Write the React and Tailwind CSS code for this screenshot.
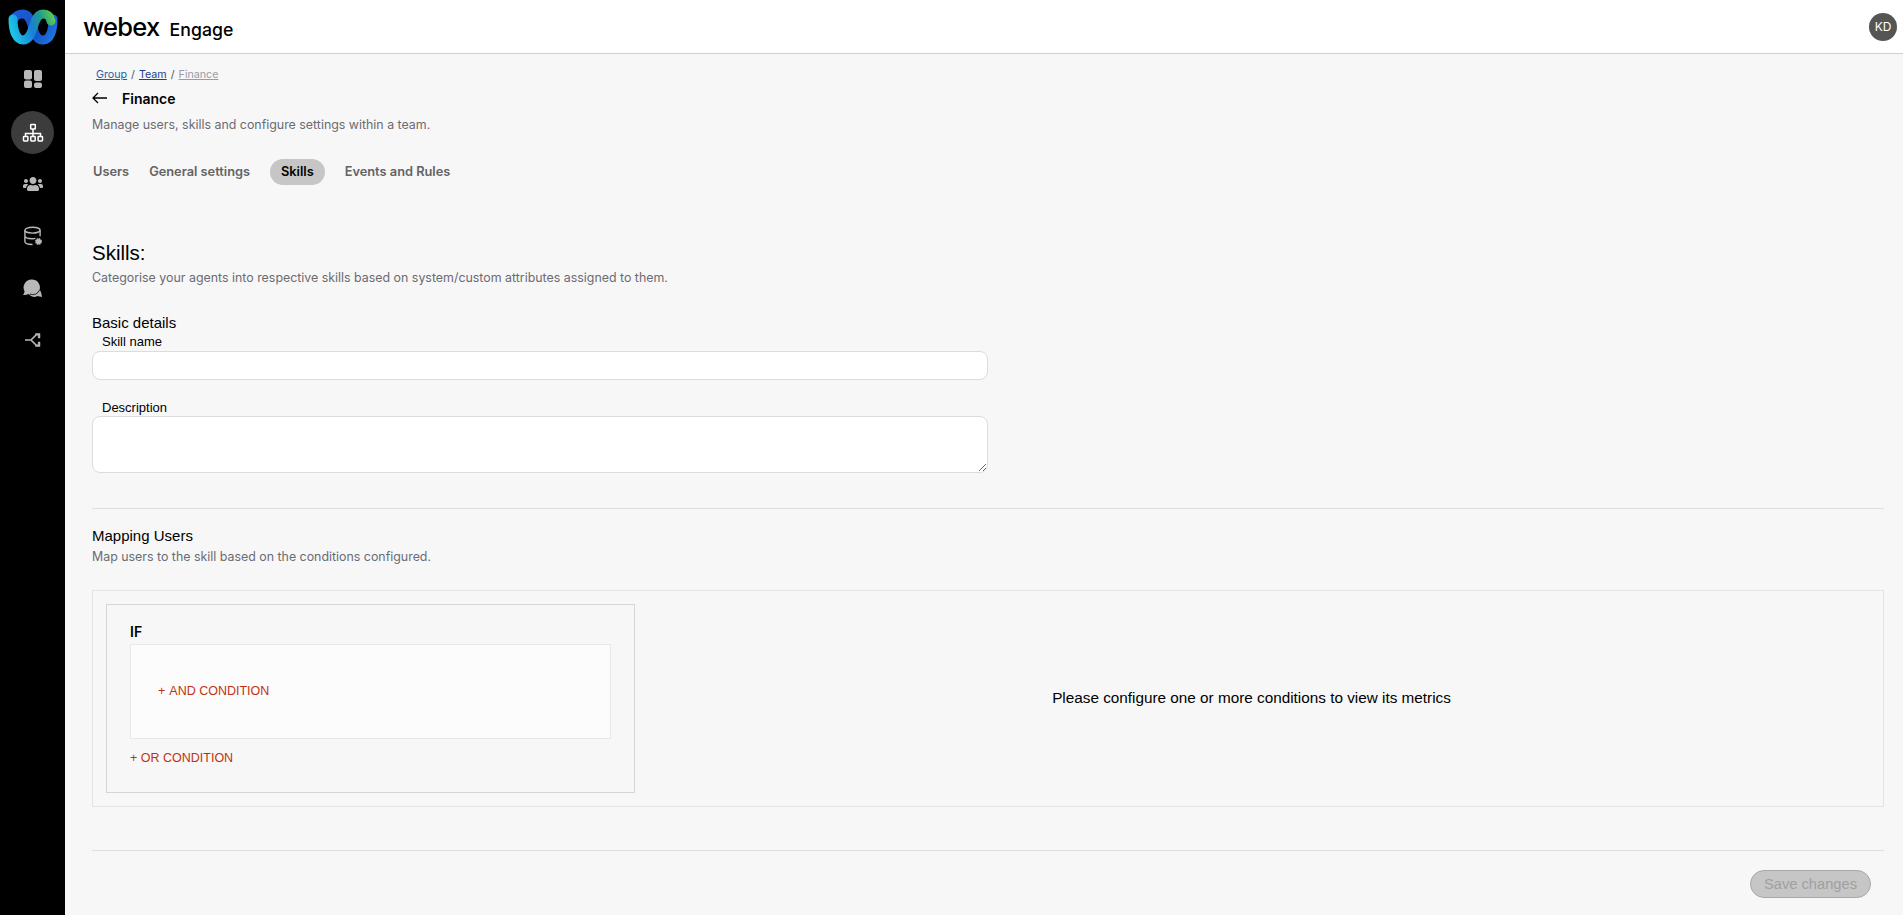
import { FaUsers } from "react-icons/fa";

const inter = "font-['Inter',sans-serif]";
const arial = "font-['Liberation_Sans',Arial,sans-serif]";

function WebexLogo() {
  return (
    <svg width="65" height="53" viewBox="0 0 65 53" fill="none" className="block">
      <defs>
        <linearGradient id="logoBack" x1="10" y1="12" x2="56" y2="42" gradientUnits="userSpaceOnUse">
          <stop offset="0" stopColor="#1d5fd6" />
          <stop offset="0.6" stopColor="#1450c8" />
          <stop offset="1" stopColor="#1f7fe0" />
        </linearGradient>
        <linearGradient id="logoFront" x1="10" y1="30" x2="54" y2="14" gradientUnits="userSpaceOnUse">
          <stop offset="0" stopColor="#1cc8e8" />
          <stop offset="0.45" stopColor="#1a7fd8" />
          <stop offset="0.7" stopColor="#1f9a8c" />
          <stop offset="1" stopColor="#62cf4c" />
        </linearGradient>
      </defs>
      <path d="M14 19C17 14 20 14 23 14C29 14 31 21 33 28C35 35 37 40 43 40C50 40 53 31 53 19" stroke="url(#logoBack)" strokeWidth="9" strokeLinecap="round" />
      <path d="M13 19C13 32 17 40 23 40C29 40 31 34 33 28C35 21 37 14 43 14C47 14 50 16 51 21" stroke="url(#logoFront)" strokeWidth="9" strokeLinecap="round" />
    </svg>
  );
}

function GridIcon() {
  return (
    <svg width="20" height="20" viewBox="0 0 20 20" fill="#b8b8b8">
      <rect x="1" y="1" width="8" height="9.500" rx="2" />
      <rect x="1" y="11.500" width="8" height="7.500" rx="2" />
      <rect x="11" y="1" width="8" height="11" rx="2" />
      <rect x="11" y="13.500" width="8" height="5.500" rx="2" />
    </svg>
  );
}

function OrgIcon() {
  return (
    <svg width="22" height="22" viewBox="0 0 22 22" fill="none" stroke="#ffffff" strokeWidth="1.500">
      <rect x="8.700" y="2.500" width="4.600" height="4.600" rx="0.600" />
      <path d="M11 7v4.500M3.500 14.500v-3h15v3M11 11.500v3" />
      <rect x="1.500" y="14.500" width="4.400" height="4.400" rx="0.600" />
      <rect x="8.800" y="14.500" width="4.400" height="4.400" rx="0.600" />
      <rect x="16.100" y="14.500" width="4.400" height="4.400" rx="0.600" />
    </svg>
  );
}

function DataIcon() {
  return (
    <svg width="20" height="20" viewBox="0 0 20 20" fill="none" stroke="#b8b8b8" strokeWidth="1.400">
      <ellipse cx="9.500" cy="4.200" rx="7.600" ry="2.900" />
      <path d="M1.900 4.200v11.400c0 1.700 3.300 2.900 7.600 2.900M1.900 9.800c0 1.700 3.300 2.900 7.600 2.900 1 0 2-.1 2.900-.3M17.100 4.200v6" />
      <circle cx="15.500" cy="15.500" r="2.800" fill="#b8b8b8" strokeWidth="1.200" strokeDasharray="1.400 0.800" />
    </svg>
  );
}

function ChatIcon() {
  return (
    <svg width="22" height="22" viewBox="0 0 22 22" fill="#b8b8b8">
      <path d="M10 1.500a8 8 0 0 1 7.600 10.400c.9.9 1.800 2.200 2.400 7.100-1.700 0-2.800-.3-4-.9a8 8 0 0 1-6.500.2 8 8 0 0 1-2.700-2.300c-1.900.8-3.700 1-5.800.9 1-1.300 1.400-2.300 1.500-3.700A8 8 0 0 1 10 1.500z" />
      <path d="M8 16a7 7 0 0 0 9.600-4.100" fill="none" stroke="#000000" strokeWidth="0.800" />
    </svg>
  );
}

function FlowIcon() {
  return (
    <svg width="18" height="18" viewBox="0 0 18 18" fill="none" stroke="#b8b8b8" strokeWidth="1.700">
      <path d="M1 9h6l5-5M7 9l5 5" />
      <path d="M11.500 2.500h4.500v4.500h-1.800v-2.700h-2.700zM11.500 15.500h4.500v-4.500h-1.800v2.700h-2.700z" fill="#b8b8b8" strokeWidth="0.500" />
    </svg>
  );
}

function Sidebar() {
  return (
    <aside className="flex w-[65px] shrink-0 flex-col items-center bg-black">
      <WebexLogo />
      <div className="mt-[16px] flex h-5 items-center justify-center">
        <GridIcon />
      </div>
      <div className="mt-[22px] flex h-[43px] w-[43px] items-center justify-center rounded-full bg-[#3c3c3c]">
        <OrgIcon />
      </div>
      <div className="mt-[20px] flex h-5 items-center justify-center text-[#b8b8b8]">
        <FaUsers size={20} />
      </div>
      <div className="mt-[32px] flex h-5 items-center justify-center">
        <DataIcon />
      </div>
      <div className="mt-[32px] flex h-[22px] items-center justify-center">
        <ChatIcon />
      </div>
      <div className="mt-[31px] flex h-[18px] items-center justify-center">
        <FlowIcon />
      </div>
    </aside>
  );
}

function Header() {
  return (
    <header className="flex h-[54px] shrink-0 items-center justify-between border-b border-[#cfcfcf] bg-white pl-[18px] pr-[6px]">
      <div className={`flex items-baseline pt-[3px] text-black ${inter}`}>
        <span className="text-[25.5px] font-medium leading-[30px] tracking-[-0.7px]">webex</span>
        <span className="ml-[10px] text-[17.7px] font-medium leading-[30px]">Engage</span>
      </div>
      <div className={`flex h-[28px] w-[28px] items-center justify-center rounded-full bg-[#555555] text-[12px] text-white ${inter}`}>
        KD
      </div>
    </header>
  );
}

function Tab({ label, active }) {
  return active ? (
    <span className="flex h-[26px] items-center rounded-full bg-[#c6c6c6] px-[11px] text-black">{label}</span>
  ) : (
    <span className="text-[#636363]">{label}</span>
  );
}

function Divider() {
  return <div className="h-px bg-[#dedede]" />;
}

export default function App() {
  return (
    <div className={`flex h-screen w-full overflow-hidden bg-[#f7f7f7] ${arial}`}>
      <Sidebar />
      <div className="flex min-w-0 flex-1 flex-col">
        <Header />
        <main className="flex-1 pl-[27px] pr-[19px]">
          <nav className={`mt-[14px] flex h-[13px] items-center gap-[4px] pl-[4px] text-[10.7px] leading-[13px] ${inter}`}>
            <a className="text-[#1f5fa8] underline">Group</a>
            <span className="text-[#555555]">/</span>
            <a className="text-[#1c3f8f] underline">Team</a>
            <span className="text-[#555555]">/</span>
            <a className="text-[#9a9aa6] underline">Finance</a>
          </nav>
          <div className="mt-[6px] flex h-[22px] items-center">
            <svg width="16" height="12" viewBox="0 0 16 12" fill="none" stroke="#000000" strokeWidth="1.300">
              <path d="M15 6H1M6 1L1 6l5 5" />
            </svg>
            <h1 className={`ml-[14px] text-[14px] font-semibold text-black ${inter}`}>Finance</h1>
          </div>
          <p className={`mt-[8px] text-[12.4px] leading-[16px] text-[#6b6b73] ${inter}`}>
            Manage users, skills and configure settings within a team.
          </p>
          <div className={`mt-[26px] flex h-[26px] items-center gap-[20px] pl-[1px] text-[12.8px] font-semibold ${inter}`}>
            <Tab label="Users" />
            <Tab label="General settings" />
            <Tab label="Skills" active />
            <Tab label="Events and Rules" />
          </div>

          <h2 className="mt-[55px] text-[20.5px] leading-[26px] text-black">Skills:</h2>
          <p className={`mt-[4px] text-[12.4px] leading-[16px] text-[#6b6b73] ${inter}`}>
            Categorise your agents into respective skills based on system/custom attributes assigned to them.
          </p>

          <h3 className="mt-[28px] text-[15px] leading-[18px] text-black">Basic details</h3>
          <label className="mt-[2px] block w-[896px]">
            <span className="block pl-[10px] text-[13px] leading-[15px] text-black">Skill name</span>
            <input type="text" className="mt-[2px] block h-[29px] w-full rounded-[8px] border border-[#dcdcdc] bg-white" />
          </label>
          <label className="mt-[20px] block w-[896px]">
            <span className="block pl-[10px] text-[13px] leading-[15px] text-black">Description</span>
            <textarea className="mt-[1px] block h-[57px] w-full rounded-[8px] border border-[#dcdcdc] bg-white" />
          </label>

          <div className="mt-[35px]">
            <Divider />
          </div>

          <h3 className="mt-[18px] text-[15px] leading-[18px] text-black">Mapping Users</h3>
          <p className={`mt-[4px] text-[12.4px] leading-[16px] text-[#6b6b73] ${inter}`}>
            Map users to the skill based on the conditions configured.
          </p>

          <section className="mt-[25px] flex h-[217px] border border-[#e4e4e4] pb-[13px] pl-[13px] pr-[15px] pt-[13px]">
            <div className="w-[529px] shrink-0 border border-[#d6d6d6] pl-[23px] pr-[23px] pt-[18px]">
              <div className={`text-[14px] font-semibold leading-[17px] text-black ${inter}`}>IF</div>
              <div className="mt-[4px] flex h-[95px] items-center border border-[#e8e8e8] bg-[#fcfcfc] pl-[27px] text-[12.5px] text-[#c1330e]">
                <span className="mr-[4px]">+</span> AND CONDITION
              </div>
              <div className="mt-[12px] text-[12.5px] leading-[15px] text-[#c1330e]">+ OR CONDITION</div>
            </div>
            <div className="flex flex-1 items-center justify-center text-[15.3px] text-black">
              Please configure one or more conditions to view its metrics
            </div>
          </section>

          <div className="mt-[43px]">
            <Divider />
          </div>

          <div className="mt-[19px] flex justify-end pr-[13px]">
            <button className="h-[28px] w-[121px] rounded-full border border-[#a8a8a8] bg-[#c6c6c6] text-[14.7px] text-[#a0a0a0]">
              Save changes
            </button>
          </div>
        </main>
      </div>
    </div>
  );
}
